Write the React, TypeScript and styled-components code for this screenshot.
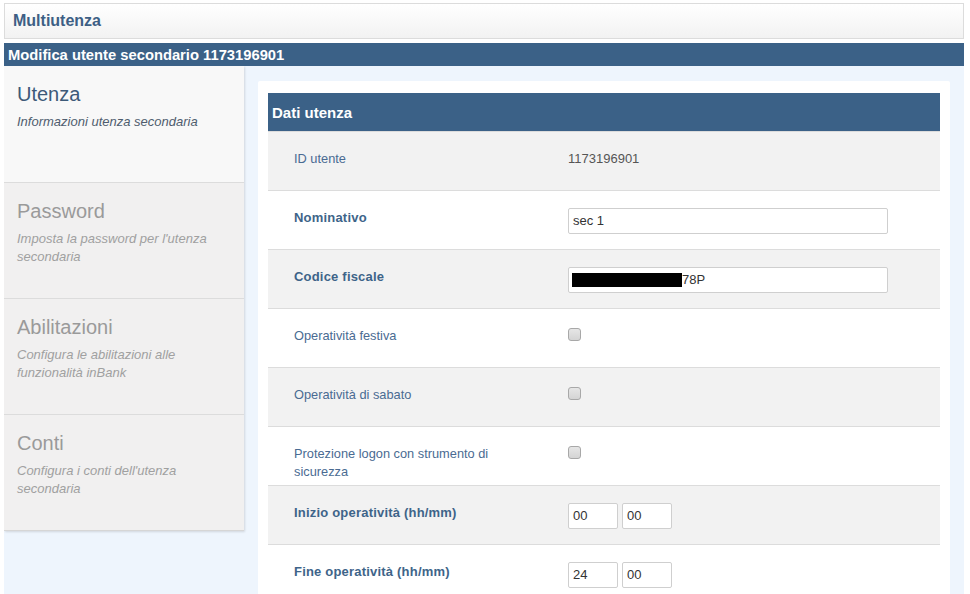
import React from 'react';
import styled, { createGlobalStyle } from 'styled-components';

const GlobalStyle = createGlobalStyle`
  body {
    margin: 0;
    padding: 3px 6px 0 4px;
    background: #fff;
    font-family: 'Liberation Sans', Arial, sans-serif;
    font-size: 12px;
  }
`;

const Page = styled.div`
  width: 960px;
`;

const TopBar = styled.div`
  height: 34px;
  border: 1px solid #dcdcdc;
  background: linear-gradient(#fff, #f2f2f2);
  display: flex;
  align-items: center;
  padding-left: 8px;
  font-size: 16px;
  font-weight: bold;
  color: #3d5f85;
`;

const TitleBar = styled.div`
  margin-top: 4px;
  height: 23px;
  background: #3b6187;
  color: #fff;
  font-size: 14.75px;
  font-weight: bold;
  display: flex;
  align-items: center;
  padding-left: 4px;
`;

const Main = styled.div`
  display: flex;
  align-items: flex-start;
  gap: 14px;
  background: #eef5fd;
  height: 540px;
  overflow: hidden;
`;

const Sidebar = styled.div`
  width: 240px;
  flex: none;
  border-bottom: 1px solid #d6d6d6;
  box-shadow: 1px 1px 2px rgba(0, 0, 0, 0.12);
`;

const SideItem = styled.div<{ $active?: boolean }>`
  height: 116px;
  box-sizing: border-box;
  padding: 17px 13px 0;
  background: ${(p) => (p.$active ? '#f8f8f8' : '#f1f0f0')};
  border-top: ${(p) => (p.$active ? 'none' : '1px solid #dcdcdc')};
`;

const SideTitle = styled.div<{ $active?: boolean }>`
  font-size: 20px;
  line-height: 22px;
  color: ${(p) => (p.$active ? '#3d5a78' : '#9a9a9a')};
`;

const SideText = styled.div<{ $active?: boolean }>`
  margin-top: 8px;
  font-size: 13px;
  line-height: 18px;
  font-style: italic;
  color: ${(p) => (p.$active ? '#4f5d6e' : '#a0a0a0')};
`;

const Panel = styled.div`
  flex: 1;
  margin: 15px 14px 0 0;
  padding: 12px 10px;
  background: #fff;
  border-radius: 2px;
`;

const TableHead = styled.div`
  height: 38px;
  background: #3b6187;
  color: #fff;
  font-size: 15px;
  font-weight: bold;
  display: flex;
  align-items: center;
  padding-left: 4px;
`;

const Row = styled.div<{ $alt?: boolean }>`
  display: grid;
  grid-template-columns: 300px 1fr;
  min-height: 59px;
  box-sizing: border-box;
  padding-top: 18px;
  background: ${(p) => (p.$alt ? '#f2f2f2' : '#fff')};
  border-top: 1px solid #dcdcdc;
`;

const Label = styled.div<{ $bold?: boolean }>`
  padding: 0 60px 0 26px;
  line-height: 18px;
  font-size: ${(p) => (p.$bold ? '13px' : '12.8px')};
  letter-spacing: ${(p) => (p.$bold ? '0.2px' : '0')};
  font-weight: ${(p) => (p.$bold ? 'bold' : 'normal')};
  color: ${(p) => (p.$bold ? '#3e6489' : '#4a6b92')};
`;

const Value = styled.div`
  display: flex;
  gap: 4px;
  line-height: 18px;
  font-size: 13px;
  color: #555;
`;

const TextInput = styled.div<{ $w: number }>`
  margin-top: -1px;
  width: ${(p) => p.$w}px;
  height: 26px;
  box-sizing: border-box;
  border: 1px solid #cfcfcf;
  border-radius: 2px;
  background: #fff;
  display: flex;
  align-items: center;
  padding-left: 4px;
  font-size: 13px;
  color: #333;
`;

const Redacted = styled.span`
  display: inline-block;
  width: 110px;
  height: 14px;
  background: #000;
  margin-left: -1px;
`;

const Check = styled.span`
  margin-top: 1px;
  width: 11px;
  height: 11px;
  border: 1px solid #a8a8a8;
  border-radius: 3px;
  background: linear-gradient(#e6e6e6, #d4d4d4);
`;

const sections = [
  { title: 'Utenza', text: 'Informazioni utenza secondaria', active: true },
  { title: 'Password', text: "Imposta la password per l'utenza secondaria" },
  { title: 'Abilitazioni', text: 'Configura le abilitazioni alle funzionalità inBank' },
  { title: 'Conti', text: "Configura i conti dell'utenza secondaria" },
];

const App: React.FC = () => (
  <Page>
    <GlobalStyle />
    <TopBar>Multiutenza</TopBar>
    <TitleBar>Modifica utente secondario 1173196901</TitleBar>
    <Main>
      <Sidebar>
        {sections.map((s) => (
          <SideItem key={s.title} $active={s.active}>
            <SideTitle $active={s.active}>{s.title}</SideTitle>
            <SideText $active={s.active}>{s.text}</SideText>
          </SideItem>
        ))}
      </Sidebar>
      <Panel>
        <TableHead>Dati utenza</TableHead>
        <Row $alt>
          <Label>ID utente</Label>
          <Value>1173196901</Value>
        </Row>
        <Row>
          <Label $bold>Nominativo</Label>
          <Value>
            <TextInput $w={320}>sec 1</TextInput>
          </Value>
        </Row>
        <Row $alt>
          <Label $bold>Codice fiscale</Label>
          <Value>
            <TextInput $w={320}>
              <Redacted />
              78P
            </TextInput>
          </Value>
        </Row>
        <Row>
          <Label>Operatività festiva</Label>
          <Value>
            <Check />
          </Value>
        </Row>
        <Row $alt>
          <Label>Operatività di sabato</Label>
          <Value>
            <Check />
          </Value>
        </Row>
        <Row>
          <Label>Protezione logon con strumento di sicurezza</Label>
          <Value>
            <Check />
          </Value>
        </Row>
        <Row $alt>
          <Label $bold>Inizio operatività (hh/mm)</Label>
          <Value>
            <TextInput $w={50}>00</TextInput>
            <TextInput $w={50}>00</TextInput>
          </Value>
        </Row>
        <Row>
          <Label $bold>Fine operatività (hh/mm)</Label>
          <Value>
            <TextInput $w={50}>24</TextInput>
            <TextInput $w={50}>00</TextInput>
          </Value>
        </Row>
      </Panel>
    </Main>
  </Page>
);

export default App;
